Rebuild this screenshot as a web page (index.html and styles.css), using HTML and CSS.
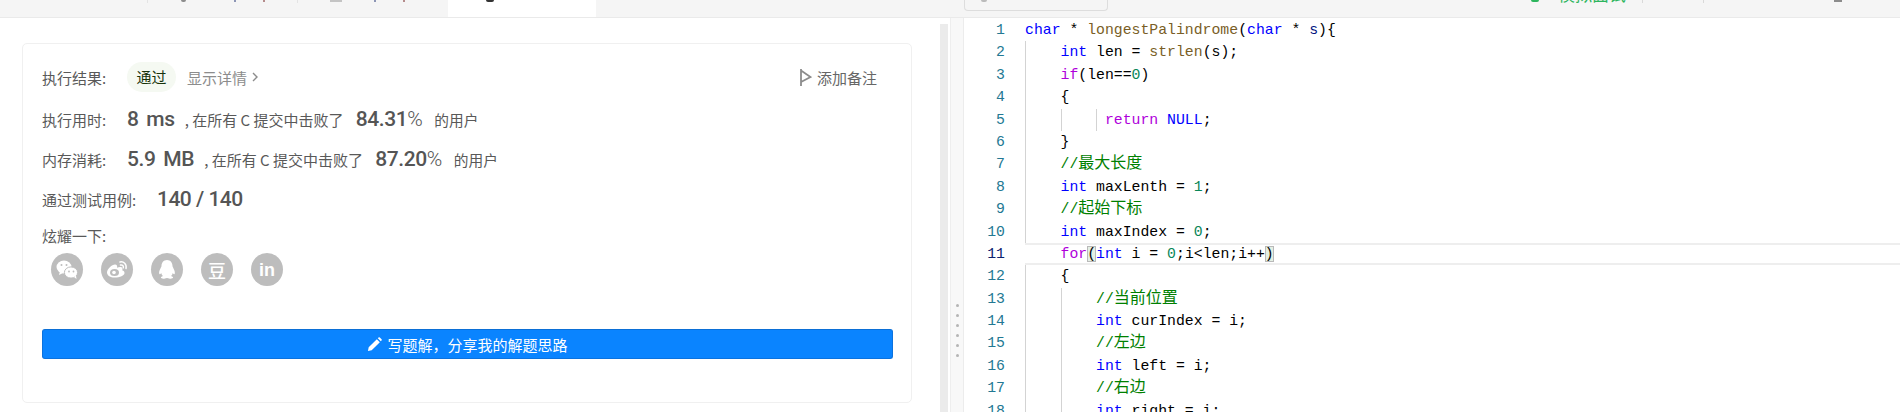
FILE: index.html
```html
<!DOCTYPE html>
<html lang="zh">
<head>
<meta charset="utf-8">
<title>提交结果</title>
<link rel="stylesheet" href="styles.css">
</head>
<body>
<div class="app">
  <header class="topbar">
    <div class="tab tab-first"></div>
    <div class="tab tab-second"><span class="tab-mark"></span><span class="tab-bit bit-a"></span><span class="tab-bit bit-b"></span></div>
    <div class="tab tab-third"><span class="tab-bar"></span><span class="tab-bit bit-c"></span><span class="tab-bit bit-b"></span></div>
    <div class="tab-active"><span class="tab-dot"></span></div>
    <div class="searchbox"><span class="search-dot"></span></div>
    <div class="top-right">
      <span class="status-dot"></span>
      <span class="status-text">模拟面试</span>
      <span class="top-sep first"></span>
      <span class="top-sep second"></span>
      <span class="top-icon"></span>
    </div>
  </header>

  <main class="main">
    <section class="left-panel">
      <div class="card">
        <div class="row row-first">
          <span class="label">执行结果:</span>
          <span class="pill">通过</span>
          <a class="details">显示详情
            <svg class="chev" viewBox="0 0 6 10" width="6" height="10"><path d="M1 1l4 4-4 4" fill="none" stroke="#8c8c8c" stroke-width="1.4"/></svg>
          </a>
          <a class="note">
            <svg class="flag" viewBox="0 0 12 17" width="12" height="17"><path d="M1 0v17M1 1.500l9.500 6.500L1 13" fill="none" stroke="#8c8c8c" stroke-width="1.800"/></svg>
            添加备注
          </a>
        </div>
        <div class="row">
          <span class="label">执行用时:</span>
          <span class="value v-time">8 ms</span>
          <span class="beat">, 在所有 C 提交中击败了</span>
          <span class="value pct">84.31<i>%</i></span>
          <span class="users">的用户</span>
        </div>
        <div class="row">
          <span class="label">内存消耗:</span>
          <span class="value v-mem">5.9 MB</span>
          <span class="beat">, 在所有 C 提交中击败了</span>
          <span class="value pct">87.20<i>%</i></span>
          <span class="users">的用户</span>
        </div>
        <div class="row">
          <span class="label label-wide">通过测试用例:</span>
          <span class="value v-cases">140 / 140</span>
        </div>
        <div class="share-title">炫耀一下:</div>
        <div class="share">
          <span class="share-icon">
            <svg viewBox="0 0 32 33" width="32" height="33"><ellipse cx="13" cy="14" rx="7.500" ry="6.500" fill="#fff"/><path d="M9 18l-1 4 4-2z" fill="#fff"/><circle cx="10.500" cy="12" r="1" fill="#bdbdbd"/><circle cx="15.500" cy="12" r="1" fill="#bdbdbd"/><ellipse cx="20" cy="19.500" rx="6.600" ry="5.600" fill="#fff" stroke="#bdbdbd"/><path d="M23 24l2.500 2-.5-3.500z" fill="#fff"/><circle cx="18" cy="18.500" r=".9" fill="#bdbdbd"/><circle cx="22.500" cy="18.500" r=".9" fill="#bdbdbd"/></svg>
          </span>
          <span class="share-icon">
            <svg viewBox="0 0 32 33" width="32" height="33"><path d="M13.500 24.500c-4 0-7.500-2-7.500-5 0-3.500 5-8 8-8 2 0 2.500 1.500 2 3.200 3-1.200 5.500-.8 5.500 1.300 0 .6-.1.900-.4 1.300 1.700.5 2.400 1.200 2.400 2.600 0 2.600-4.500 4.600-10 4.600z" fill="#fff"/><ellipse cx="13.500" cy="19.500" rx="4.500" ry="3.500" fill="#bdbdbd"/><circle cx="13" cy="19.500" r="1.800" fill="#fff"/><path d="M19 9c3.500-.8 7 2 6 6.500M19.500 12c2-.4 3.200 1 2.800 2.800" fill="none" stroke="#fff" stroke-width="1.500" stroke-linecap="round"/></svg>
          </span>
          <span class="share-icon">
            <svg viewBox="0 0 32 33" width="32" height="33"><path d="M16 7c3.600 0 5.400 2.800 5.500 6 .1 1.500 2.800 4.400 2.300 7.500-.2 1.200-1.200.8-2-.5-.3 1.200-.9 2.200-1.700 3 1.300.5 2 1 2 1.600 0 .9-2.300 1.400-4 .9-.8-.3-1.300-.5-2.100-.5s-1.300.2-2.100.5c-1.700.5-4 0-4-.9 0-.6.700-1.100 2-1.600-.8-.8-1.400-1.800-1.700-3-.8 1.300-1.800 1.700-2 .5-.5-3.100 2.200-6 2.300-7.500.1-3.200 1.900-6 5.500-6z" fill="#fff"/></svg>
          </span>
          <span class="share-icon glyph-dou">豆</span>
          <span class="share-icon glyph-in">in</span>
        </div>
        <button class="solution-btn" type="button">
          <svg viewBox="0 0 16 16" width="15" height="15"><path d="M1 15l.8-4L10.500 2.300l3.200 3.200L5 14.200zM11.500 1.300l.8-.8a1 1 0 0 1 1.400 0l1.800 1.800a1 1 0 0 1 0 1.400l-.8.800z" fill="#fff"/></svg>
          写题解，分享我的解题思路
        </button>
      </div>
      <div class="scroll-track"></div>
    </section>

    <div class="splitter">
      <span></span><span></span><span></span><span></span><span></span><span></span>
    </div>

    <section class="editor">
      <div class="gutter">
        <div>1</div><div>2</div><div>3</div><div>4</div><div>5</div><div>6</div>
        <div>7</div><div>8</div><div>9</div><div>10</div><div class="num-active">11</div><div>12</div>
        <div>13</div><div>14</div><div>15</div><div>16</div><div>17</div><div>18</div>
      </div>
      <div class="code">
        <div class="ln"><span class="k">char</span> * <span class="f">longestPalindrome</span>(<span class="k">char</span> * <span class="p">s</span>){</div>
        <div class="ln g1">    <span class="k">int</span> len = <span class="f">strlen</span>(s);</div>
        <div class="ln g1">    <span class="c">if</span>(len==<span class="n">0</span>)</div>
        <div class="ln g1">    {</div>
        <div class="ln g1 g2 g3">         <span class="c">return</span> <span class="k">NULL</span>;</div>
        <div class="ln g1">    }</div>
        <div class="ln g1">    <span class="m">//<span class="cn">最大长度</span></span></div>
        <div class="ln g1">    <span class="k">int</span> maxLenth = <span class="n">1</span>;</div>
        <div class="ln g1">    <span class="m">//<span class="cn">起始下标</span></span></div>
        <div class="ln g1">    <span class="k">int</span> maxIndex = <span class="n">0</span>;</div>
        <div class="ln active">    <span class="c">for</span><span class="br">(</span><span class="k">int</span> i = <span class="n">0</span>;i&lt;len;i++<span class="br">)</span></div>
        <div class="ln g1">    {</div>
        <div class="ln g1 g2">        <span class="m">//<span class="cn">当前位置</span></span></div>
        <div class="ln g1 g2">        <span class="k">int</span> curIndex = i;</div>
        <div class="ln g1 g2">        <span class="m">//<span class="cn">左边</span></span></div>
        <div class="ln g1 g2">        <span class="k">int</span> left = i;</div>
        <div class="ln g1 g2">        <span class="m">//<span class="cn">右边</span></span></div>
        <div class="ln g1 g2">        <span class="k">int</span> right = i;</div>
      </div>
    </section>
  </main>
</div>
</body>
</html>
```
FILE: styles.css
```css
* { box-sizing: border-box; }
html, body { margin: 0; height: 412px; overflow: hidden; background: #fff; }
body { font-family: "Noto Sans CJK SC", "Liberation Sans", sans-serif; color: #595959; font-size: 15px; }
.app { display: flex; flex-direction: column; width: 1900px; height: 412px; overflow: hidden; }

/* top bar: only the last pixels of its content are inside the viewport */
.topbar { display: flex; height: 18px; flex: none; background: #f5f5f5; border-bottom: 1px solid #eaeaea; overflow: hidden; }
.tab { height: 3px; flex: none; display: flex; align-items: flex-start; }
.tab-first { width: 148px; border-right: 1px solid #e4e4e4; }
.tab-second { width: 150px; padding-left: 33px; border-right: 1px solid #e4e4e4; }
.tab-third { width: 150px; padding-left: 32px; }
.tab-mark { width: 5px; height: 2px; background: #8c8c8c; border-radius: 0 0 3px 3px; }
.tab-bar { width: 12px; height: 2px; background: #c4c4c4; }
.tab-bit { width: 2px; height: 1.500px; background: #8c95b5; }
.bit-a { margin-left: 48px; }
.bit-c { margin-left: 32px; }
.bit-b { margin-left: 27px; background: #b58c8c; }
.tab-active { width: 148px; height: 18px; flex: none; background: #fff; padding-left: 38px; }
.tab-dot { display: block; width: 8px; height: 2px; background: #333; border-radius: 0 0 4px 4px; }
.searchbox { width: 144px; height: 11px; flex: none; margin-left: 368px; padding-left: 16px; border: 1px solid #ddd; border-top: 0; border-radius: 0 0 4px 4px; }
.search-dot { display: block; width: 6px; height: 2px; background: #bbb; border-radius: 0 0 3px 3px; }
.top-right { display: flex; align-items: flex-start; margin-left: 423px; height: 17px; }
.status-dot { width: 8px; height: 2px; background: #2db55d; border-radius: 0 0 4px 4px; }
.status-text { margin-left: 19px; width: 70px; height: 16px; font-size: 17px; line-height: 16px; margin-top: -14px; color: #2db55d; }
.top-sep { width: 1px; height: 3px; background: #d9d9d9; }
.top-sep.first { margin-left: 14px; }
.top-sep.second { margin-left: 60px; }
.top-icon { width: 8px; height: 2px; margin-left: 130px; background: #8c8c8c; }

/* layout */
.main { flex: 1; display: flex; min-height: 0; }
.left-panel { width: 951px; flex: none; display: flex; align-items: flex-start; padding: 25px 2px 0 22px; border-right: 1px solid #eee; }
.card { width: 890px; height: 360px; flex: none; padding: 13px 18px 0 19px; background: #fff; border: 1px solid #f0f0f0; border-radius: 5px; }
.scroll-track { width: 8px; height: 400px; margin: -19px 0 0 28px; flex: none; background: #ebebeb; }
.splitter { width: 12px; flex: none; display: flex; flex-direction: column; align-items: center; gap: 7px; padding-top: 286px; background: #f8f8f8; }
.splitter span { width: 3px; height: 3px; border-radius: 50%; background: #b5b5b5; }

/* result card */
.row { display: flex; align-items: center; height: 40px; }
.row-first { height: 42px; padding-bottom: 2px; }
.label { width: 85px; flex: none; }
.label-wide { width: 115px; }
.pill { width: 49px; height: 30px; border-radius: 15px; background: #f5f9f2; color: #17330b; text-align: center; line-height: 29px; }
.details { margin-left: 11px; color: #8c8c8c; display: flex; align-items: center; gap: 5px; }
.note { margin-left: auto; margin-right: 16px; display: flex; align-items: center; gap: 5px; color: #666; }
.value { font-family: Roboto, "Liberation Sans", sans-serif; font-size: 21px; font-weight: 500; color: #555; letter-spacing: -0.4px; word-spacing: 3px; }
.value i { font-style: normal; font-weight: 300; }
.v-cases { word-spacing: 0; letter-spacing: -0.5px; }
.beat { margin-left: 10px; font-size: 15px; width: 161px; white-space: nowrap; }
.pct { margin-left: 10px; }
.users { margin-left: 12px; font-size: 14.7px; }
.share-title { margin-top: -1px; height: 35px; line-height: 36px; }
.share { display: flex; gap: 18px; padding-left: 9px; height: 33px; }
.share-icon { width: 32px; height: 33px; border-radius: 50%; background: #bdbdbd; color: #fff; display: flex; align-items: center; justify-content: center; }
.glyph-dou { font-size: 18px; font-weight: 500; line-height: 1; }
.glyph-in { font-family: "Liberation Sans", sans-serif; font-size: 18px; font-weight: 700; line-height: 1; }
.solution-btn { display: flex; align-items: center; justify-content: center; gap: 5px; width: 851px; height: 30px; margin-top: 43px; padding: 0; border: 1px solid #0b72de; border-top-color: #0b6fd6; border-radius: 3px; background: #0a84ff; color: #fff; font: inherit; font-size: 15px; }

/* editor */
.editor { flex: 1; display: flex; min-width: 0; background: #fff; border-left: 1px solid #ececec; overflow: hidden; font-family: "Liberation Mono", "Noto Sans CJK SC", monospace; font-size: 14.8px; padding-top: 1px; }
.gutter { width: 61px; flex: none; text-align: right; padding-right: 20px; color: #237893; }
.gutter div { height: 22.4px; line-height: 22.4px; }
.gutter .num-active { color: #0b216f; }
.code { flex: 1; min-width: 0; color: #000; }
.ln { height: 22.4px; line-height: 22.4px; white-space: pre; background-repeat: no-repeat; }
.g1 { background-image: linear-gradient(#d3d3d3, #d3d3d3); background-size: 1px 100%; background-position: 0 0; }
.g1.g2 { background-image: linear-gradient(#d3d3d3, #d3d3d3), linear-gradient(#d3d3d3, #d3d3d3); background-size: 1px 100%, 1px 100%; background-position: 0 0, 35.500px 0; }
.g1.g2.g3 { background-image: linear-gradient(#d3d3d3, #d3d3d3), linear-gradient(#d3d3d3, #d3d3d3), linear-gradient(#d3d3d3, #d3d3d3); background-size: 1px 100%, 1px 100%, 1px 100%; background-position: 0 0, 35.500px 0, 71px 0; }
.active { border-top: 2px solid #eeeeee; border-bottom: 2px solid #eeeeee; line-height: 18.4px; }
.k { color: #0000ff; }
.c { color: #af00db; }
.f { color: #795e26; }
.p { color: #001080; }
.n { color: #098658; }
.m { color: #008000; }
.cn { font-family: "Noto Sans CJK SC", sans-serif; font-size: 16px; line-height: 0; }
.br { background: #e4efe4; outline: 1px solid #b9b9b9; outline-offset: -1px; }
```
